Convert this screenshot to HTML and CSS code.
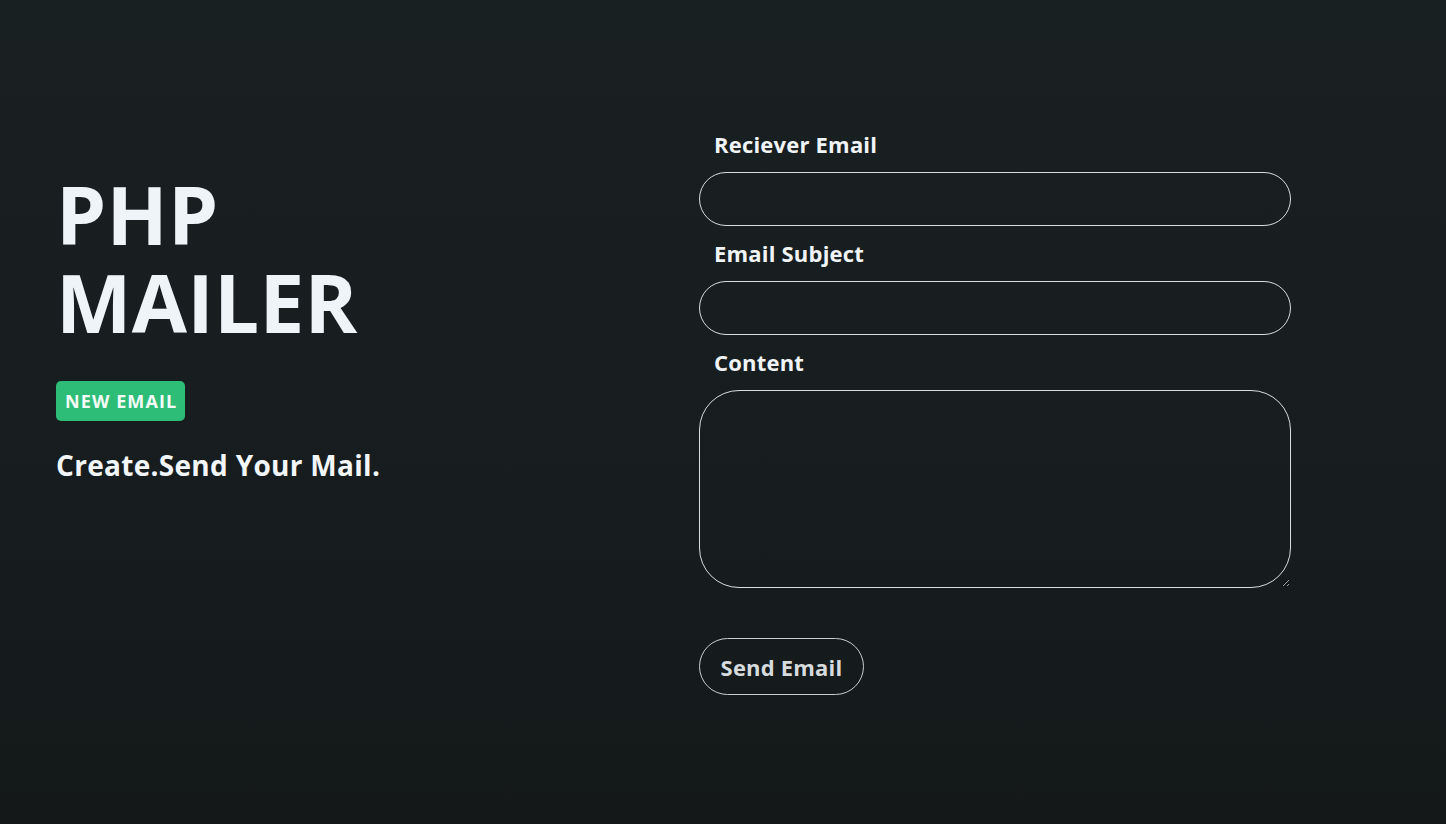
FILE: index.html
```html
<!DOCTYPE html>
<html lang="en">
<head>
<meta charset="utf-8">
<title>PHP Mailer</title>
<link rel="stylesheet" href="styles.css">
</head>
<body>
<main class="page">
  <section class="intro">
    <h1 class="title">PHP<br>MAILER</h1>
    <span class="badge">NEW EMAIL</span>
    <p class="tagline">Create.Send Your Mail.</p>
  </section>
  <form class="mail-form">
    <label class="field-label" for="to">Reciever Email</label>
    <input class="field-input" id="to" type="email">
    <label class="field-label" for="subject">Email Subject</label>
    <input class="field-input" id="subject" type="text">
    <label class="field-label" for="content">Content</label>
    <textarea class="field-area" id="content"></textarea>
    <button class="send-btn" type="button">Send Email</button>
  </form>
</main>
</body>
</html>
```

FILE: styles.css
```css
html, body {
  margin: 0;
  padding: 0;
}
body {
  min-height: 100vh;
  background: linear-gradient(180deg, #192022 0%, #171d1f 60%, #141819 100%);
  font-family: "Open Sans", "Noto Sans", sans-serif;
  color: #eef4f7;
}
.page {
  display: flex;
  align-items: flex-start;
  padding-left: 56px;
}
.intro {
  width: 643px;
  padding-top: 170px;
  display: flex;
  flex-direction: column;
  align-items: flex-start;
}
.title {
  margin: 0;
  font-size: 80px;
  line-height: 88px;
  font-weight: 700;
  color: #eef4f8;
  letter-spacing: 0.3px;
}
.badge {
  margin-top: 35px;
  height: 40px;
  box-sizing: border-box;
  padding: 0 8px 0 9px;
  display: inline-flex;
  align-items: center;
  background: #2dbd77;
  border-radius: 5px;
  color: #f4fbf7;
  font-size: 18px;
  letter-spacing: 1.1px;
  font-weight: 700;
}
.tagline {
  margin: 26px 0 0;
  font-size: 28px;
  line-height: 36px;
  letter-spacing: 0.3px;
  font-weight: 700;
  color: #f2f6f8;
}
.mail-form {
  width: 592px;
  padding-top: 128px;
  display: flex;
  flex-direction: column;
}
.field-label {
  padding: 2px 0 0 15px;
  font-size: 22px;
  line-height: 28px;
  letter-spacing: 0.2px;
  font-weight: 700;
  color: #f0f4f6;
  margin-bottom: 14px;
}
.field-input {
  box-sizing: border-box;
  height: 54px;
  border: 1px solid #d9dcde;
  border-radius: 27px;
  background: transparent;
  margin: 0 0 11px;
  padding: 0 24px;
  color: #eef4f7;
  font: inherit;
  font-size: 18px;
  outline: none;
}
.field-area {
  box-sizing: border-box;
  height: 198px;
  border: 1px solid #d9dcde;
  border-radius: 40px;
  background: transparent;
  margin: 0;
  padding: 18px 24px;
  color: #eef4f7;
  font: inherit;
  font-size: 18px;
  outline: none;
}
.send-btn {
  align-self: flex-start;
  margin-top: 50px;
  box-sizing: border-box;
  width: 165px;
  height: 57px;
  border: 1px solid #c9cdd0;
  border-radius: 29px;
  background: transparent;
  color: #d6dbde;
  font-family: inherit;
  font-size: 22px;
  letter-spacing: 0.2px;
  font-weight: 700;
  cursor: pointer;
}
```
